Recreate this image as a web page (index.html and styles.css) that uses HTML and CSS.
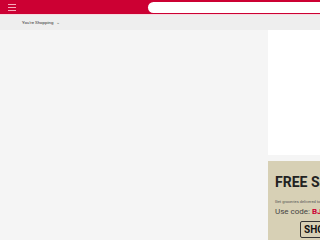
FILE: index.html
```html
<!DOCTYPE html>
<html lang="en">
<head>
  <meta charset="UTF-8" />
  <meta name="viewport" content="width=device-width, initial-scale=1.0" />
  <title>BJ's Wholesale</title>
  <link rel="stylesheet" href="styles.css">
</head>
<body>
  <div class="header">
    <div class="menu">
      <span></span><span></span><span></span>
    </div>
    <div class="search"></div>
  </div>
  <div class="subbar">
    <span class="shopping">You're Shopping</span>
    <span class="caret">&#8964;</span>
  </div>
  <div class="main">
    <div class="content"></div>
    <div class="side">
      <div class="side-card"></div>
      <div class="promo">
        <h2>FREE Same-Day Delivery</h2>
        <p class="small">Get groceries delivered to your door in as little as 2 hours.</p>
        <p class="code">Use code: <b>BJSFREE</b></p>
        <div class="btn">SHOP NOW</div>
      </div>
    </div>
  </div>
</body>
</html>
```

FILE: styles.css
```css
html, body {
  margin: 0;
  padding: 0;
  width: 320px;
  height: 240px;
  overflow: hidden;
  background: #f5f5f5;
  font-family: Roboto, "Liberation Sans", Arial, sans-serif;
}
.header {
  height: 14px;
  background: #cc0033;
  display: flex;
  align-items: center;
  border-bottom: 1px solid #f7d9df;
}
.menu {
  width: 8px;
  margin-left: 8px;
  flex-shrink: 0;
  display: flex;
  flex-direction: column;
  gap: 2px;
}
.menu span {
  display: block;
  height: 1px;
  background: #f7a8ba;
}
.search {
  margin-left: 132px;
  width: 200px;
  height: 11px;
  background: #fff;
  border-radius: 6px;
  flex-shrink: 0;
}
.subbar {
  height: 15px;
  background: #eeeeee;
  display: flex;
  align-items: center;
  padding-left: 22px;
  font-size: 4.4px;
  color: #333;
}
.caret {
  margin-left: 3px;
  font-size: 5px;
  color: #666;
  position: relative;
  top: -1px;
}
.main {
  display: flex;
  height: 210px;
}
.content {
  width: 268px;
  flex-shrink: 0;
  background: #f5f5f5;
}
.side {
  width: 180px;
  flex-shrink: 0;
  display: flex;
  flex-direction: column;
  gap: 6px;
}
.side-card {
  height: 125px;
  flex-shrink: 0;
  background: #fff;
}
.promo {
  flex: 1;
  background: #d7d0b5;
  padding: 12px 7px 0;
  color: #222;
}
.promo h2 {
  margin: 0;
  font-size: 14px;
  font-weight: 700;
  white-space: nowrap;
  line-height: 18px;
}
.promo .small {
  margin: 8px 0 0;
  font-size: 4px;
  color: #555;
  white-space: nowrap;
}
.promo .code {
  margin: 3px 0 0;
  font-size: 8px;
  color: #444;
  white-space: nowrap;
}
.promo .code b {
  color: #cc0033;
}
.btn {
  display: inline-block;
  margin: 5px 0 0 25px;
  padding: 2px 3px;
  border: 1px solid #333;
  border-radius: 2px;
  font-size: 10px;
  font-weight: 700;
  color: #111;
  white-space: nowrap;
}
```
